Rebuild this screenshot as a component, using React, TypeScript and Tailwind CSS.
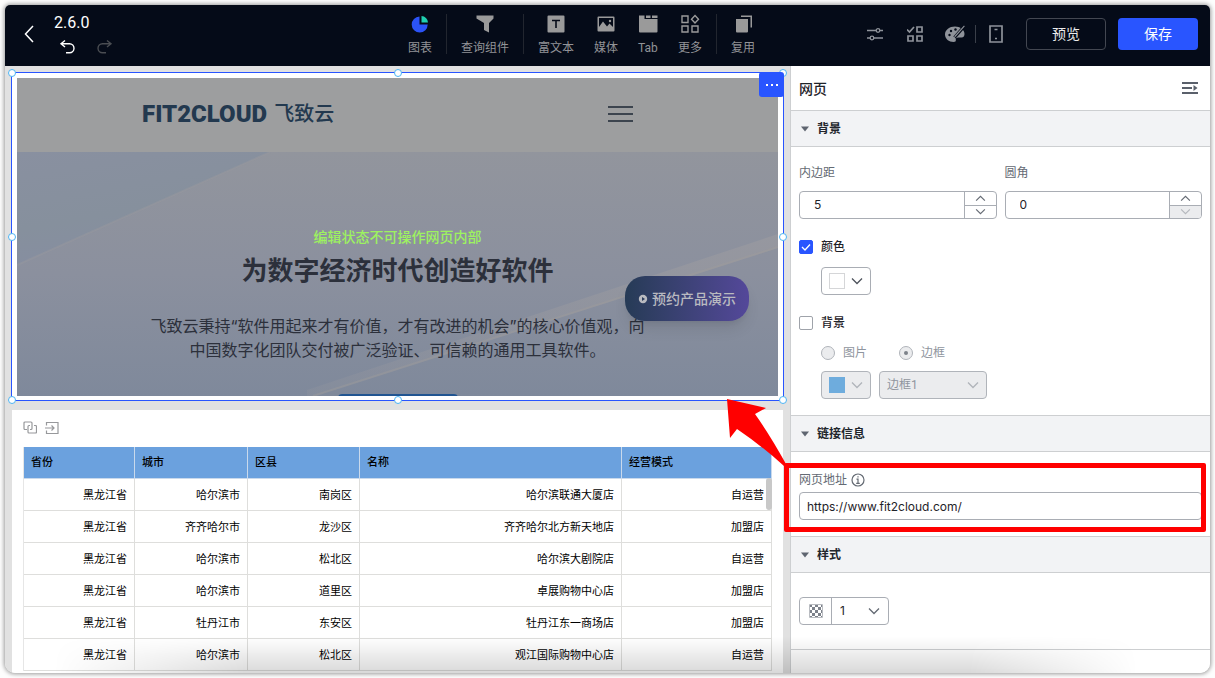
import type { ReactNode } from 'react';
import clsx from 'clsx';

const rows = [
	['黑龙江省', '哈尔滨市', '南岗区', '哈尔滨联通大厦店', '自运营'],
	['黑龙江省', '齐齐哈尔市', '龙沙区', '齐齐哈尔北方新天地店', '加盟店'],
	['黑龙江省', '哈尔滨市', '松北区', '哈尔滨大剧院店', '自运营'],
	['黑龙江省', '哈尔滨市', '道里区', '卓展购物中心店', '加盟店'],
	['黑龙江省', '牡丹江市', '东安区', '牡丹江东一商场店', '加盟店'],
	['黑龙江省', '哈尔滨市', '松北区', '观江国际购物中心店', '自运营'],
];

const handles = [
	'left-0 top-0',
	'left-1/2 top-0',
	'left-full top-0',
	'left-0 top-1/2',
	'left-full top-1/2',
	'left-0 top-full',
	'left-1/2 top-full',
	'left-full top-full',
];

function Chevron({ className, up }: { className?: string; up?: boolean }) {
	return (
		<svg viewBox="0 0 12 8" fill="none" stroke="currentColor" strokeWidth="1.3" className={className} aria-hidden="true">
			<path d={up ? 'M1 6.5 6 1.5l5 5' : 'M1 1.5l5 5 5-5'} />
		</svg>
	);
}

function ToolItem({ label, children }: { label: string; children: ReactNode }) {
	return (
		<button type="button" className="flex flex-col items-center gap-1 px-[10px] pt-[3px] text-xs leading-5 text-[#929397]">
			<svg viewBox="0 0 20 20" className="h-5 w-5" fill="#9a9a9a" aria-hidden="true">
				{children}
			</svg>
			{label}
		</button>
	);
}

function ToolDivider() {
	return <span className="mx-1 h-10 w-px bg-[#22262f]" />;
}

function Header() {
	return (
		<header className="flex h-[61px] shrink-0 items-center bg-[#050b18] pb-[3px]">
			<div className="flex flex-1 items-center pl-[19px]">
				<button type="button" aria-label="返回" className="text-white">
					<svg viewBox="0 0 10 18" className="h-[18px] w-[10px]" fill="none" stroke="currentColor" strokeWidth="1.5">
						<path d="M9 1 1.500 9 9 17" />
					</svg>
				</button>
				<div className="ml-5 flex flex-col gap-[6px]">
					<span className="leading-5 text-white">2.6.0</span>
					<div className="flex gap-[22px] pl-[5px]">
						<button type="button" aria-label="撤销" className="text-white">
							<svg viewBox="0 0 16 16" className="h-4 w-4" fill="none" stroke="currentColor" strokeWidth="1.4">
								<path d="M6 1.500 2 4.700l4 3.300M2 4.700h8.500a4.500 4.500 0 0 1 0 9H7" />
							</svg>
						</button>
						<button type="button" aria-label="恢复" disabled className="text-[#4a4d52]">
							<svg viewBox="0 0 16 16" className="h-4 w-4" fill="none" stroke="currentColor" strokeWidth="1.4">
								<path d="m10 1.500 4 3.200L10 8M14 4.700H5.500a4.500 4.500 0 0 0 0 9H9" />
							</svg>
						</button>
					</div>
				</div>
			</div>
			<nav className="flex items-center">
				<ToolItem label="图表">
					<path d="M9.500 2.500V10.500H17.700A8 8 0 1 1 9.500 2.500Z" fill="#2b53f7" />
					<path d="M11.500 2a7 7 0 0 1 6.500 6.500h-6.500Z" fill="#1fcfb0" />
				</ToolItem>
				<ToolDivider />
				<ToolItem label="查询组件">
					<path d="M1.500 1.500h17v3l-4.500 4.500v9.500l-5-2.500v-7L1.500 4.500Z" />
				</ToolItem>
				<ToolDivider />
				<ToolItem label="富文本">
					<path d="M2.500 1.500h15a1 1 0 0 1 1 1v15a1 1 0 0 1-1 1h-15a1 1 0 0 1-1-1v-15a1 1 0 0 1 1-1Z" />
					<path d="M6 6.500h8M10 6.500V14" stroke="#050b18" strokeWidth="1.600" />
				</ToolItem>
				<ToolItem label="媒体">
					<path d="M2.500 2.500h15a1 1 0 0 1 1 1v13a1 1 0 0 1-1 1h-15a1 1 0 0 1-1-1v-13a1 1 0 0 1 1-1Z" />
					<path d="M3 13V4h14v9l-3.500-3.500-2.500 3-4-5Z" fill="#050b18" />
					<circle cx="14" cy="7" r="1.200" />
				</ToolItem>
				<ToolItem label="Tab">
					<path d="M1 1.500h5.500V5H19.500v12.500a1 1 0 0 1-1 1H2a1 1 0 0 1-1-1Z" />
					<path d="M8 1.500h4.500V4H8ZM14 1.500h5.500V4H14Z" />
				</ToolItem>
				<ToolItem label="更多">
					<g fill="none" stroke="#9a9a9a" strokeWidth="1.400">
						<path d="M2 2h6v6.500H2ZM2 12h6v6H2ZM12 12h6v6h-6ZM15 1.500l3.500 3.800L15 9l-3.500-3.700Z" />
					</g>
				</ToolItem>
				<ToolDivider />
				<ToolItem label="复用">
					<path d="M3 5h12v12.500a1 1 0 0 1-1 1H4a1 1 0 0 1-1-1ZM8 1.500h11v12h-1.500V3H8Z" />
				</ToolItem>
			</nav>
			<div className="flex w-[445px] items-center justify-end pr-3 text-[#8f939a]">
				<button type="button" aria-label="设置">
					<svg viewBox="0 0 16 16" className="h-4 w-4" fill="none" stroke="currentColor" strokeWidth="1.300">
						<path d="M0 4.500h9M13 4.500h3M0 12h3M7 12h9" />
						<circle cx="11" cy="4.500" r="1.800" />
						<circle cx="5" cy="12" r="1.800" />
					</svg>
				</button>
				<button type="button" aria-label="批量操作" className="ml-6">
					<svg viewBox="0 0 16 16" className="h-4 w-4" fill="none" stroke="currentColor" strokeWidth="1.700">
						<path d="m0 3.500 2.500 2.500L7 1M10 1h5v5h-5ZM1 10h5v5H1ZM10 10h5v5h-5Z" />
					</svg>
				</button>
				<button type="button" aria-label="主题" className="ml-[22px]">
					<svg viewBox="0 0 20 18" className="h-[18px] w-5" fill="currentColor">
						<path d="M10 1.500C4.500 1.500 0 5 0 9.500s4 7.500 8.500 7.500c2 0 2.500-1 2.300-2.300-.2-1.500.8-2.200 2.400-2.200h3.300c2.200 0 3-1.600 3-3.500 0-4.500-4.500-7.500-9.500-7.500Z" />
						<g fill="#050b18">
							<circle cx="4.500" cy="10" r="1.200" />
							<circle cx="6" cy="6" r="1.200" />
							<circle cx="10.500" cy="4.500" r="1.200" />
						</g>
						<path d="M9.500 12.500 19.500 1" stroke="#050b18" strokeWidth="3" />
						<path d="M8 14.500 10 10.500 19 .5l.8.8-8.800 10Z" />
					</svg>
				</button>
				<span className="mx-[10px] h-[18px] w-px bg-[#3a3f49]" />
				<button type="button" aria-label="移动端" className="ml-[2px]">
					<svg viewBox="0 0 16 18" className="h-[18px] w-4" fill="none" stroke="currentColor" strokeWidth="1.700">
						<path d="M2 1h12v16H2Z" />
						<path d="M6.500 4.500h3M7 13.500h2" />
					</svg>
				</button>
				<button type="button" className="ml-[22px] h-8 w-20 rounded border border-[#434751] text-sm text-[#ebebec]">
					预览
				</button>
				<button type="button" className="ml-3 h-8 w-20 rounded bg-[#2955ff] text-sm text-white">
					保存
				</button>
			</div>
		</header>
	);
}

function WebPreview() {
	return (
		<div className="relative border border-[#2955ff] bg-white px-[5px] pt-[5px] pb-1">
			<div className="relative overflow-hidden">
				<div className="flex h-[74px] items-center justify-between bg-[#9d9e9f] pr-[145px] pb-[2px] pl-[125px]">
					<div className="flex items-center gap-[7px] text-[#23394f]">
						<span className="text-2xl font-black">FIT2CLOUD</span>
						<span className="text-xl font-medium">飞致云</span>
					</div>
					<div className="flex w-[25px] flex-col gap-[5px]">
						<span className="h-[2px] bg-[#3c444e]" />
						<span className="h-[2px] bg-[#3c444e]" />
						<span className="h-[2px] bg-[#3c444e]" />
					</div>
				</div>
				<div className="relative h-[244px] overflow-hidden bg-linear-to-b from-[#92959d] via-[#8b909e] to-[#7f899b]">
					<svg viewBox="0 0 761 244" preserveAspectRatio="none" className="absolute inset-0 h-full w-full" aria-hidden="true">
						<defs>
							<linearGradient id="corner" x1="0" y1="0" x2="0.400" y2="1">
								<stop offset="0" stopColor="#8990a0" />
								<stop offset="0.600" stopColor="#86909d" />
								<stop offset="1" stopColor="#868da1" />
							</linearGradient>
							<linearGradient id="beam" x1="0" y1="1" x2="1" y2="0">
								<stop offset="0" stopColor="#9a9aa0" stopOpacity="0.200" />
								<stop offset="1" stopColor="#9a9aa0" stopOpacity="0.700" />
							</linearGradient>
						</defs>
						<path d="M0 0H253L0 113Z" fill="url(#corner)" />
						<path d="M253 0 0 113" stroke="#9a9a9f" strokeWidth="2" opacity="0.400" />
						<path d="M761 82 290 238v6h8L761 96Z" fill="url(#beam)" />
						<path d="M761 95 296 244" stroke="#a09d9b" strokeWidth="2" opacity="0.400" />
					</svg>
					<div className="relative flex flex-col items-center pt-[99px] text-center text-[#2c303b]">
						<h1 className="text-[26px] leading-10 font-bold">为数字经济时代创造好软件</h1>
						<p className="mt-[23px] font-['Inter','Noto_Sans_CJK_SC',sans-serif] leading-6">
							飞致云秉持“软件用起来才有价值，才有改进的机会”的核心价值观，向
							<br />
							中国数字化团队交付被广泛验证、可信赖的通用工具软件。
						</p>
						<span className="mt-8 h-10 w-[120px] rounded bg-[#215591]" />
					</div>
				</div>
				<a
					href="#"
					className="absolute top-[198px] right-[29px] flex h-[45px] w-[124px] items-center justify-center gap-1 rounded-[20px] bg-linear-to-r from-[#263b56] to-[#54489a] text-sm font-medium text-[#b9bac0] shadow-lg"
				>
					<svg viewBox="0 0 10 10" className="h-[10px] w-[10px]" aria-hidden="true">
						<circle cx="5" cy="5" r="4.200" fill="#b9bac0" />
						<path d="M4 3v4l3-2Z" fill="#2b3c5c" />
					</svg>
					预约产品演示
				</a>
				<p className="absolute inset-x-0 top-[149px] text-center text-sm font-medium text-[#9df260]">
					编辑状态不可操作网页内部
				</p>
			</div>
			{handles.map((place) => (
				<span
					key={place}
					className={clsx('absolute h-2 w-2 -translate-1/2 rounded-full border border-[#4db4f3] bg-white', place)}
				/>
			))}
			<button
				type="button"
				aria-label="更多操作"
				className="absolute -top-px -right-px flex h-[25px] w-[25px] items-center justify-center gap-[3px] rounded-[3px] bg-[#2955ff]"
			>
				<span className="h-[2px] w-[2px] bg-white" />
				<span className="h-[2px] w-[2px] bg-white" />
				<span className="h-[2px] w-[2px] bg-white" />
			</button>
		</div>
	);
}

function StoreTable() {
	return (
		<div className="mx-px mt-[9px] bg-white px-[11px] pt-[11px] pb-4">
			<div className="flex gap-2 text-[#97989b]">
				<button type="button" aria-label="联动">
					<svg viewBox="0 0 14 14" className="h-[14px] w-[14px]" fill="none" stroke="currentColor" strokeWidth="1.200">
						<path d="M4 8.500H2a1 1 0 0 1-1-1V2a1 1 0 0 1 1-1h6a1 1 0 0 1 1 1v5.500a1 1 0 0 1-1 1H7" />
						<path d="M7 4.500H6a1 1 0 0 0-1 1V11a1 1 0 0 0 1 1h6.500a1 1 0 0 0 1-1V5.500a1 1 0 0 0-1-1H11" />
					</svg>
				</button>
				<button type="button" aria-label="跳转">
					<svg viewBox="0 0 14 14" className="h-[14px] w-[14px]" fill="none" stroke="currentColor" strokeWidth="1.200">
						<path d="M1.500 4.500V1.500h11.500v11H1.500v-3M0 7h9M6.500 4.500 9 7 6.500 9.500" />
					</svg>
				</button>
			</div>
			<div className="relative mt-3">
				<table className="w-full table-fixed border-separate border-spacing-0 border-l border-[#e6e6e6] text-[11px]">
					<colgroup>
						<col className="w-[111px]" />
						<col className="w-[113px]" />
						<col className="w-[112px]" />
						<col />
						<col className="w-[150px]" />
					</colgroup>
					<thead>
						<tr className="h-8 bg-[#6ba1de] text-left">
							{['省份', '城市', '区县', '名称', '经营模式'].map((name) => (
								<th key={name} className="border-r border-b border-[#c9d9ec] px-[7px] pt-px font-medium">
									{name}
								</th>
							))}
						</tr>
					</thead>
					<tbody>
						{rows.map((row, i) => (
							<tr key={i} className="h-8 text-right">
								{row.map((cell, j) => (
									<td key={j} className="border-r border-b border-[#dededc] px-[7px] pt-[3px]">
										{cell}
									</td>
								))}
							</tr>
						))}
					</tbody>
				</table>
				<span className="absolute top-[31px] right-0 h-8 w-[6px] rounded-full bg-[#c8c8c8]" />
			</div>
		</div>
	);
}

function Section({ title, children }: { title: string; children: ReactNode }) {
	return (
		<section>
			<button
				type="button"
				className="flex h-[37px] w-full items-center gap-2 border-y border-[#cdcfd1] bg-[#f2f3f5] px-[10px] pt-px text-xs font-bold text-[#22262c]"
			>
				<svg viewBox="0 0 8 6" className="h-[6px] w-2" fill="#5f6570" aria-hidden="true">
					<path d="M0 .500h8L4 5.500Z" />
				</svg>
				{title}
			</button>
			{children}
		</section>
	);
}

function NumberField({ id, label, value, atMin }: { id: string; label: string; value: number; atMin?: boolean }) {
	return (
		<div>
			<label htmlFor={id} className="block leading-5 text-[#646a73]">
				{label}
			</label>
			<div className="mt-2 flex h-7 overflow-hidden rounded border border-[#a9adb4]">
				<input
					id={id}
					type="text"
					inputMode="numeric"
					defaultValue={value}
					className="min-w-0 flex-1 px-[14px] font-['Inter'] text-xs outline-none"
				/>
				<div className="flex w-8 flex-col border-l border-[#a9adb4] text-[#646a73]">
					<button type="button" aria-label="增加" className="flex flex-1 items-center justify-center">
						<Chevron up className="h-[7px] w-[11px]" />
					</button>
					<button
						type="button"
						aria-label="减少"
						disabled={atMin}
						className="flex flex-1 items-center justify-center border-t border-[#a9adb4] disabled:bg-[#ebecee] disabled:text-[#b5b8bd]"
					>
						<Chevron className="h-[7px] w-[11px]" />
					</button>
				</div>
			</div>
		</div>
	);
}

function Check({ label, checked }: { label: string; checked?: boolean }) {
	return (
		<label className="relative mt-[18px] flex h-5 items-center gap-2 font-medium">
			<input
				type="checkbox"
				defaultChecked={checked}
				className="peer h-[14px] w-[14px] appearance-none rounded-[2px] border border-[#9fa3aa] checked:border-[#2955ff] checked:bg-[#2955ff]"
			/>
			<svg
				viewBox="0 0 14 14"
				className="absolute left-0 hidden h-[14px] w-[14px] peer-checked:block"
				fill="none"
				stroke="white"
				strokeWidth="1.300"
				aria-hidden="true"
			>
				<path d="m3 7 3 3 5-5.500" />
			</svg>
			{label}
		</label>
	);
}

function BorderRadio({ label, checked }: { label: string; checked?: boolean }) {
	return (
		<label className="flex items-center gap-2">
			<input
				type="radio"
				name="background-type"
				defaultChecked={checked}
				disabled
				className="flex h-[14px] w-[14px] appearance-none items-center justify-center rounded-full border border-[#b0b4ba] bg-[#ebecee] before:h-1 before:w-1 before:rounded-full checked:before:bg-[#7d828a]"
			/>
			{label}
		</label>
	);
}

function Callout() {
	return (
		<>
			<div className="pointer-events-none absolute top-[11px] right-1 bottom-1 -left-[7px] rounded-[2px] border-[5px] border-[#ff0000]" />
			<svg viewBox="0 0 60 68" className="pointer-events-none absolute -top-[53px] -left-[64px] h-[68px] w-[60px]" fill="#ff0000" aria-hidden="true">
				<path d="M0 0 39 9 28 15Q43 36 59 65L57 67Q35 47 10 30L3 39Z" />
			</svg>
		</>
	);
}

function SettingsPanel() {
	return (
		<aside className="relative z-10 w-[420px] shrink-0 border-l border-[#cdcfd1] bg-white text-xs text-[#1f2329]">
			<div className="flex h-11 items-center justify-between pr-3 pl-2">
				<h2 className="pt-px text-sm font-medium">网页</h2>
				<button type="button" aria-label="收起" className="text-[#5a606b]">
					<svg viewBox="0 0 16 14" className="h-[14px] w-4" fill="none" stroke="currentColor" strokeWidth="2">
						<path d="M0 2h16M0 7h10M0 12h16" />
						<path d="M11.500 4v6L15.500 7Z" fill="currentColor" stroke="none" />
					</svg>
				</button>
			</div>
			<Section title="背景">
				<div className="px-2 py-4">
					<div className="grid grid-cols-2 gap-2">
						<NumberField id="padding" label="内边距" value={5} />
						<NumberField id="radius" label="圆角" value={0} atMin />
					</div>
					<Check label="颜色" checked />
					<button
						type="button"
						aria-label="选择颜色"
						className="mt-[10px] ml-[22px] flex h-7 w-[50px] items-center justify-center gap-[6px] rounded border border-[#a9adb4] text-[#4e535c]"
					>
						<span className="h-4 w-4 border border-[#d5d6d8] bg-white" />
						<Chevron className="h-2 w-3" />
					</button>
					<Check label="背景" />
					<div className="mt-[10px] ml-[22px] flex h-5 gap-8 text-[#8f959e]">
						<BorderRadio label="图片" />
						<BorderRadio label="边框" checked />
					</div>
					<div className="mt-2 ml-[22px] flex gap-2 text-[#b0b4ba]">
						<button
							type="button"
							aria-label="边框颜色"
							disabled
							className="flex h-7 w-[50px] items-center justify-center gap-[6px] rounded border border-[#b0b4ba] bg-[#ebecee]"
						>
							<span className="h-4 w-4 bg-[#6eacdd]" />
							<Chevron className="h-2 w-3" />
						</button>
						<div className="relative">
							<select
								aria-label="边框样式"
								disabled
								className="h-7 w-[108px] appearance-none rounded border border-[#b0b4ba] bg-[#ebecee] px-[7px] text-[#8f959e] opacity-100"
							>
								<option>边框1</option>
							</select>
							<Chevron className="pointer-events-none absolute top-[10px] right-2 h-2 w-3" />
						</div>
					</div>
				</div>
			</Section>
			<Section title="链接信息">
				<div className="relative px-2 pt-[18px] pb-4">
					<label htmlFor="url" className="flex items-center gap-1 leading-5 text-[#646a73]">
						网页地址
						<svg viewBox="0 0 14 14" className="h-[14px] w-[14px]" fill="none" stroke="currentColor" strokeWidth="1.200" aria-hidden="true">
							<circle cx="7" cy="7" r="6" />
							<path d="M7 3.200v1.300M5.500 6.200H7v4M5.200 10.300h3.600" />
						</svg>
					</label>
					<input
						id="url"
						type="text"
						defaultValue="https://www.fit2cloud.com/"
						className="mt-[2px] block h-7 w-full rounded border border-[#a9adb4] px-[7px] font-['Inter'] text-xs outline-none"
					/>
					<Callout />
				</div>
			</Section>
			<Section title="样式">
				<div className="border-b border-[#cdcfd1] px-2 py-6">
					<div className="flex h-7 w-[90px] rounded border border-[#a9adb4]">
						<span className="flex w-8 items-center justify-center border-r border-[#a9adb4]">
							<svg viewBox="0 0 14 14" className="h-[14px] w-[14px]" fill="#7d828b" aria-hidden="true">
								<path d="M.500.500h13v13H.500Z" fill="none" stroke="#b9bcc1" />
								<path d="M1 1h2v2H1ZM6 1h3v2H6ZM3 3h3v3H3ZM9 3h3v3H9ZM1 6h2v3H1ZM6 6h3v3H6ZM12 6h1v3h-1ZM3 9h3v3H3ZM9 9h3v3H9ZM12 1h1v2h-1ZM1 12h2v1H1ZM6 12h3v1H6ZM12 12h1v1h-1Z" />
							</svg>
						</span>
						<div className="relative flex-1">
							<select aria-label="不透明度" className="h-full w-full appearance-none px-2 font-['Inter'] text-xs outline-none">
								<option>1</option>
							</select>
							<Chevron className="pointer-events-none absolute top-[9px] right-2 h-2 w-3 text-[#646a73]" />
						</div>
					</div>
				</div>
			</Section>
		</aside>
	);
}

export default function App() {
	return (
		<div className="h-screen bg-[#fdfdfd] p-[5px] font-['Roboto','Noto_Sans_CJK_SC',sans-serif]">
			<div className="relative flex h-full flex-col overflow-hidden rounded-t-[5px] rounded-b-[10px] bg-white shadow-[0_0_4px_1px_#9a9a9a]">
				<Header />
				<div className="flex min-h-0 flex-1">
					<main className="min-w-0 flex-1 overflow-hidden bg-[#e1e1e1] px-[6px] pt-[6px]">
						<WebPreview />
						<StoreTable />
					</main>
					<SettingsPanel />
				</div>
				{/* shade along the bottom edge */}
				<div className="pointer-events-none absolute inset-x-0 bottom-0 z-20 h-9 bg-linear-to-b from-transparent to-black/15 [mask-image:linear-gradient(to_right,transparent_4%,black_20%,black_80%,transparent_94%)]" />
			</div>
		</div>
	);
}
